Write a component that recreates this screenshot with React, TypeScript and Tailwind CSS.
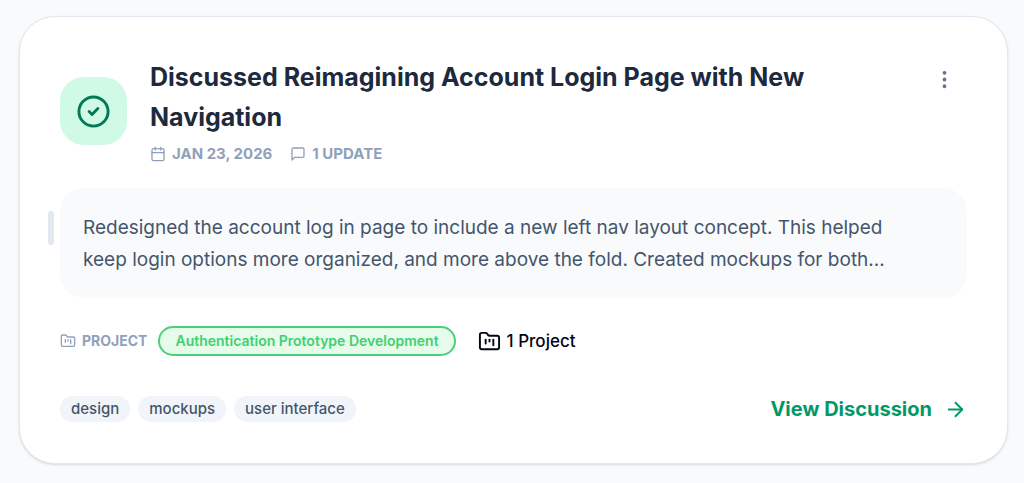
import { ReactNode } from 'react'
import { ArrowRight, Calendar, CircleCheck, EllipsisVertical, FolderKanban } from 'lucide-react'

type Discussion = {
  title: string
  date: string
  updates: number
  summary: string
  project: string
  projectCount: number
  tags: string[]
}

const DISCUSSION: Discussion = {
  title: 'Discussed Reimagining Account Login Page with New Navigation',
  date: 'Jan 23, 2026',
  updates: 1,
  summary:
    'Redesigned the account log in page to include a new left nav layout concept. This helped keep login options more organized, and more above the fold. Created mockups for both...',
  project: 'Authentication Prototype Development',
  projectCount: 1,
  tags: ['design', 'mockups', 'user interface'],
}

function MessageIcon() {
  return (
    <svg
      viewBox="0 0 24 24"
      className="size-4"
      fill="none"
      stroke="currentColor"
      strokeWidth="2"
      strokeLinecap="round"
      strokeLinejoin="round"
      aria-hidden="true"
    >
      <path d="M21 15a2 2 0 0 1-2 2H7l-4 4V5a2 2 0 0 1 2-2h14a2 2 0 0 1 2 2z" />
    </svg>
  )
}

function MetaItem({ icon, children }: { icon: ReactNode; children: ReactNode }) {
  return (
    <span className="flex items-center gap-1.5">
      {icon}
      <span>{children}</span>
    </span>
  )
}

function DiscussionCard({ discussion }: { discussion: Discussion }) {
  const { title, date, updates, summary, project, projectCount, tags } = discussion

  return (
    <article className="rounded-[36px] border border-slate-200 bg-white p-10 shadow-sm">
      <header className="flex items-center gap-[23px]">
        <div className="flex h-17 w-[67px] shrink-0 items-center justify-center rounded-3xl bg-emerald-100 text-emerald-700">
          <CircleCheck className="size-[35px]" aria-hidden="true" />
        </div>
        <div className="min-w-0 flex-1">
          <h2 className="text-[25px] leading-10 font-bold text-slate-800">{title}</h2>
          <div className="mt-1.5 flex items-center gap-[18px] text-[15px] leading-[22px] font-bold text-slate-400 uppercase">
            <MetaItem icon={<Calendar className="size-4" aria-hidden="true" />}>{date}</MetaItem>
            <MetaItem icon={<MessageIcon />}>
              {updates} {updates === 1 ? 'update' : 'updates'}
            </MetaItem>
          </div>
        </div>
        <button type="button" aria-label="More options" className="self-start p-[11px] text-slate-500">
          <EllipsisVertical className="size-[23px]" />
        </button>
      </header>

      <div className="relative mt-[23px] rounded-3xl bg-slate-50 pt-6 pr-14 pb-[22px] pl-[23px]">
        <div className="absolute top-[23px] -left-3 h-[34px] w-1.5 rounded-full bg-slate-200" aria-hidden="true" />
        <p className="text-[19px] leading-8 text-slate-600">{summary}</p>
      </div>

      <div className="mt-7 flex items-center">
        <span className="flex items-center gap-1.5 text-[14px] leading-5 font-bold text-slate-400 uppercase">
          <FolderKanban className="size-4" aria-hidden="true" />
          Project
        </span>
        <span className="ml-[11px] rounded-full border-2 border-[#4bd07a] bg-[#e6fbea] px-[15px] py-[3px] text-[14px] leading-5 font-semibold text-[#42d072]">
          {project}
        </span>
        <span className="ml-[22px] flex items-center gap-1.5 text-[17px] leading-6 font-medium text-slate-950">
          <FolderKanban className="size-[23px]" aria-hidden="true" />
          {projectCount} Project
        </span>
      </div>

      <footer className="mt-[39px] flex items-center justify-between">
        <ul className="flex gap-2">
          {tags.map((tag) => (
            <li
              key={tag}
              className="rounded-full bg-slate-100 px-[11px] py-[3px] text-[15px] leading-5 font-medium text-slate-600"
            >
              {tag}
            </li>
          ))}
        </ul>
        <a href="#discussion" className="flex items-center gap-3 text-xl leading-7 font-bold text-emerald-600">
          View Discussion
          <ArrowRight className="size-[23px]" aria-hidden="true" />
        </a>
      </footer>
    </article>
  )
}

export default function App() {
  return (
    <main className="min-h-screen bg-slate-50 pt-4 pr-4 pb-[19px] pl-[19px] font-[Inter,'Liberation_Sans',sans-serif] antialiased">
      <DiscussionCard discussion={DISCUSSION} />
    </main>
  )
}
